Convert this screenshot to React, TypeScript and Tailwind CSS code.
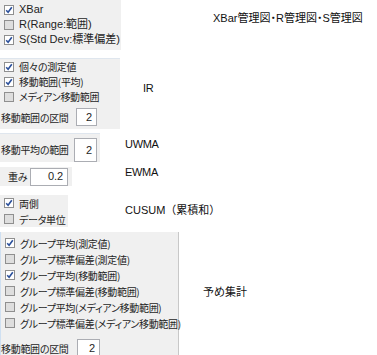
import React from 'react'

const jp = "font-['Noto_Sans_CJK_JP',sans-serif] [font-feature-settings:'palt'] text-[10px] tracking-[-0.3px]"

const Box = ({ checked }: { checked: boolean }) => (
    <span
        className={`flex h-[10px] w-[10px] shrink-0 items-center justify-center border border-[#8f8f8f] ${checked ? 'bg-white' : 'bg-[#dedede]'}`}
    >
        {checked && (
            <svg width="8" height="8" viewBox="0 0 8 8">
                <path d="M1.2 4.3 L3.1 6.3 L6.8 1.3" fill="none" stroke="#2a4f9a" strokeWidth="1.6" />
            </svg>
        )}
    </span>
)

const Check = ({ label, checked, h = 'h-[16px]' }: { label: string; checked?: boolean; h?: string }) => (
    <div className={`flex items-center gap-[5px] pl-[4px] ${h}`}>
        <Box checked={!!checked} />
        <span className="whitespace-nowrap">{label}</span>
    </div>
)

const NumField = ({ value, w, h }: { value: string; w: string; h: string }) => (
    <div className={`flex shrink-0 items-center justify-end border border-[#abadb3] bg-white pr-[4px] text-[11px] tracking-normal font-['Liberation_Sans',sans-serif] ${w} ${h}`}>
        {value}
    </div>
)

const Label = ({ text, cls }: { text: string; cls: string }) => (
    <div className={`whitespace-nowrap text-[11px] leading-[16px] text-[#111] font-['Liberation_Sans','Noto_Sans_CJK_JP',sans-serif] ${cls}`}>
        {text}
    </div>
)

export default function App() {
    return (
        <div className="h-[355px] w-[377px] overflow-hidden bg-white text-[#1e1e1e]">
            <div className="flex items-start">
                <div className="h-[50px] w-[121px] bg-[#f0f0f0] pt-[2px] text-[11px] font-['Liberation_Sans','Noto_Sans_CJK_JP',sans-serif]">
                    <Check label="XBar" checked h="h-[15px]" />
                    <Check label="R(Range:範囲)" h="h-[15px]" />
                    <Check label="S(Std Dev:標準偏差)" checked h="h-[15px]" />
                </div>
                <Label text="XBar管理図・R管理図・S管理図" cls="ml-[92px] mt-[10px] [font-feature-settings:'palt']" />
            </div>

            <div className={`mt-[8px] flex items-start ${jp}`}>
                <div className="h-[71px] w-[120px] shrink-0 border-t border-[#dfe6ee] bg-[#f0f0f0]">
                    <Check label="個々の測定値" checked h="h-[15px]" />
                    <Check label="移動範囲(平均)" checked h="h-[15px]" />
                    <Check label="メディアン移動範囲" h="h-[15px]" />
                    <div className="mt-[4px] flex items-center pl-[1px]">
                        <span className="w-[75px] whitespace-nowrap">移動範囲の区間</span>
                        <NumField value="2" w="w-[21px]" h="h-[18px]" />
                    </div>
                </div>
                <Label text="IR" cls="ml-[23px] mt-[22px]" />
            </div>

            <div className={`mt-[4px] flex items-start ${jp}`}>
                <div className="flex h-[29px] w-[100px] shrink-0 items-end border-t border-[#dfe6ee] bg-[#f0f0f0] pl-[1px]">
                    <span className="mb-[5px] w-[73px] whitespace-nowrap">移動平均の範囲</span>
                    <NumField value="2" w="w-[23px]" h="h-[24px]" />
                </div>
                <Label text="UWMA" cls="ml-[25px] mt-[3px]" />
            </div>

            <div className={`mt-[5px] flex items-start ${jp}`}>
                <div className="flex h-[19px] w-[72px] shrink-0 items-center gap-[3px] bg-[#f0f0f0] pl-[8px]">
                    <span className="whitespace-nowrap">重み</span>
                    <NumField value="0.2" w="w-[38px]" h="h-[18px]" />
                </div>
                <Label text="EWMA" cls="ml-[53px] -mt-[3px]" />
            </div>

            <div className={`mt-[9px] flex items-start ${jp}`}>
                <div className="h-[32px] w-[68px] shrink-0 bg-[#f0f0f0]">
                    <Check label="両側" checked />
                    <Check label="データ単位" />
                </div>
                <Label text="CUSUM（累積和）" cls="ml-[57px] mt-[7px] tracking-normal [font-feature-settings:normal]" />
            </div>

            <div className={`mt-[5px] flex items-start ${jp}`}>
                <div className="h-[125px] w-[179px] shrink-0 border-l border-r border-l-[#cfe0f2] border-r-[#c8c8c8] bg-[#f0f0f0] pt-[3px]">
                    <Check label="グループ平均(測定値)" checked />
                    <Check label="グループ標準偏差(測定値)" />
                    <Check label="グループ平均(移動範囲)" checked />
                    <Check label="グループ標準偏差(移動範囲)" />
                    <Check label="グループ平均(メディアン移動範囲)" />
                    <Check label="グループ標準偏差(メディアン移動範囲)" />
                    <div className="mt-[8px] flex items-center">
                        <span className="w-[76px] whitespace-nowrap">移動範囲の区間</span>
                        <NumField value="2" w="w-[23px]" h="h-[18px]" />
                    </div>
                </div>
                <Label text="予め集計" cls="ml-[24px] mt-[52px] tracking-normal [font-feature-settings:normal]" />
            </div>
        </div>
    )
}
